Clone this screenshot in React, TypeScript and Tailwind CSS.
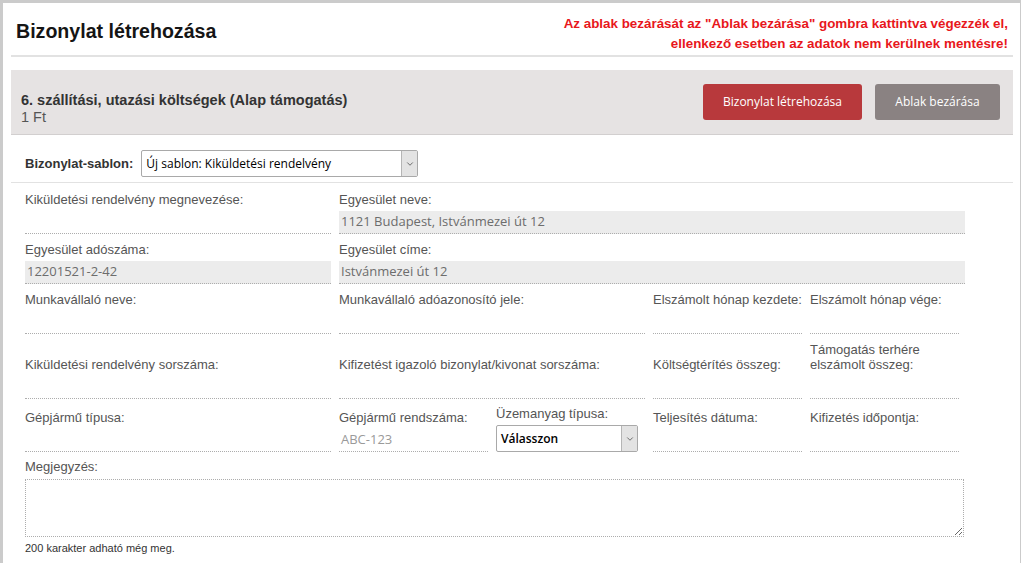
import { ChevronDown } from "lucide-react";

type Field = {
  label: string;
  span?: string;
  value?: string;
  placeholder?: string;
  filled?: boolean;
  wide?: boolean;
  select?: boolean;
};

const rows: Field[][] = [
  [
    { label: "Kiküldetési rendelvény megnevezése:", span: "col-span-2" },
    { label: "Egyesület neve:", span: "col-span-4", value: "1121 Budapest, Istvánmezei  út 12", filled: true, wide: true },
  ],
  [
    { label: "Egyesület adószáma:", span: "col-span-2", value: "12201521-2-42", filled: true },
    { label: "Egyesület címe:", span: "col-span-4", value: "Istvánmezei  út 12", filled: true, wide: true },
  ],
  [
    { label: "Munkavállaló neve:", span: "col-span-2" },
    { label: "Munkavállaló adóazonosító jele:", span: "col-span-2" },
    { label: "Elszámolt hónap kezdete:" },
    { label: "Elszámolt hónap vége:" },
  ],
  [
    { label: "Kiküldetési rendelvény sorszáma:", span: "col-span-2" },
    { label: "Kifizetést igazoló bizonylat/kivonat sorszáma:", span: "col-span-2" },
    { label: "Költségtérítés összeg:" },
    { label: "Támogatás terhére elszámolt összeg:" },
  ],
  [
    { label: "Gépjármű típusa:", span: "col-span-2" },
    { label: "Gépjármű rendszáma:", placeholder: "ABC-123" },
    { label: "Üzemanyag típusa:", select: true },
    { label: "Teljesítés dátuma:" },
    { label: "Kifizetés időpontja:" },
  ],
];

const rowGap = ["", "mt-[8px]", "mt-[8px]", "mt-[8px]", "mt-[7px]"];

function FakeSelect({ text, bold = false, width }: { text: string; bold?: boolean; width: string }) {
  return (
    <div className={`${width} h-[27px] flex items-stretch border border-[#a9a9a9] bg-white rounded-[2px]`}>
      <div
        className={`flex-1 flex items-center px-[4px] text-[12px] text-black font-['Open_Sans',sans-serif] ${
          bold ? "font-semibold" : ""
        }`}
      >
        {text}
      </div>
      <div className="w-[16px] flex items-center justify-center bg-[#e3e3e3] border-l border-[#b5b5b5]">
        <ChevronDown size={10} strokeWidth={2} className="text-[#555]" />
      </div>
    </div>
  );
}

function FieldCell({ f }: { f: Field }) {
  return (
    <div className={`${f.span ?? ""} flex flex-col justify-end`}>
      <div className="text-[13px] leading-[15px] text-[#555] mb-[4px]">{f.label}</div>
      {f.select ? (
        <FakeSelect text="Válasszon" bold width="w-[142px]" />
      ) : (
        <div
          className={`h-[23px] border-b border-dotted border-[#adadad] flex items-center px-[2px] text-[13px] font-['Open_Sans',sans-serif] ${
            f.filled ? "bg-[#ececec] text-[#6d6d6d]" : "text-[#9a9a9a]"
          } ${f.wide ? "-mr-[6px]" : ""}`}
        >
          {f.value ?? f.placeholder ?? ""}
        </div>
      )}
    </div>
  );
}

export default function App() {
  return (
    <div className="w-[1024px] h-[563px] overflow-hidden bg-white font-['Liberation_Sans',Arial,sans-serif]">
      <div className="w-[1021px] h-[563px] border-t-[3px] border-l-[3px] border-r border-[#cbcbcb] bg-white">
        <div className="ml-[8px] w-[1002px]">
          {/* Header */}
          <div className="h-[54px] flex justify-between items-start border-b-2 border-[#e2e2e2]">
            <h1 className="mt-[16px] ml-[5px] text-[19.6px] leading-[24px] font-bold text-[#151515]">
              Bizonylat létrehozása
            </h1>
            <div className="mt-[11px] mr-[5px] text-right text-[13.4px] leading-[20px] font-bold text-[#e8171c]">
              <div>Az ablak bezárását az "Ablak bezárása" gombra kattintva végezzék el,</div>
              <div>ellenkező esetben az adatok nem kerülnek mentésre!</div>
            </div>
          </div>

          {/* Item panel */}
          <div className="mt-[13px] h-[65px] bg-[#e6e3e3] border-b border-[#d2cfcf] flex items-start justify-between pl-[10px] pr-[13px]">
            <div className="mt-[22px]">
              <div className="text-[14.5px] leading-[17px] font-bold text-[#333]">
                6. szállítási, utazási költségek (Alap támogatás)
              </div>
              <div className="text-[14.5px] leading-[17px] text-[#555]">1 Ft</div>
            </div>
            <div className="mt-[14px] flex gap-[13px] font-['Open_Sans',sans-serif] text-[12px] text-white">
              <button className="w-[159px] h-[36px] rounded-[3px] bg-[#b8393c]">Bizonylat létrehozása</button>
              <button className="w-[125px] h-[36px] rounded-[3px] bg-[#8a8282]">Ablak bezárása</button>
            </div>
          </div>

          {/* Template select */}
          <div className="mt-[15px] pl-[14px] flex items-center gap-[8px] pb-[5px] border-b border-[#e2e2e2]">
            <span className="text-[13px] font-bold text-[#333]">Bizonylat-sablon:</span>
            <FakeSelect text="Új sablon: Kiküldetési rendelvény" width="w-[277px]" />
          </div>

          {/* Form */}
          <div className="pl-[14px] pt-[9px]">
            {rows.map((row, i) => (
              <div key={i} className={`grid grid-cols-[repeat(6,149px)] gap-x-[8px] ${rowGap[i]}`}>
                {row.map((f) => (
                  <FieldCell key={f.label} f={f} />
                ))}
              </div>
            ))}

            <div className="mt-[7px] text-[13px] leading-[15px] text-[#555]">Megjegyzés:</div>
            <textarea className="mt-[5px] block w-[939px] h-[58px] border border-dotted border-[#adadad] outline-none" />
            <div className="mt-[4px] text-[11px] leading-[14px] text-[#333]">200 karakter adható még meg.</div>
          </div>
        </div>
      </div>
    </div>
  );
}
